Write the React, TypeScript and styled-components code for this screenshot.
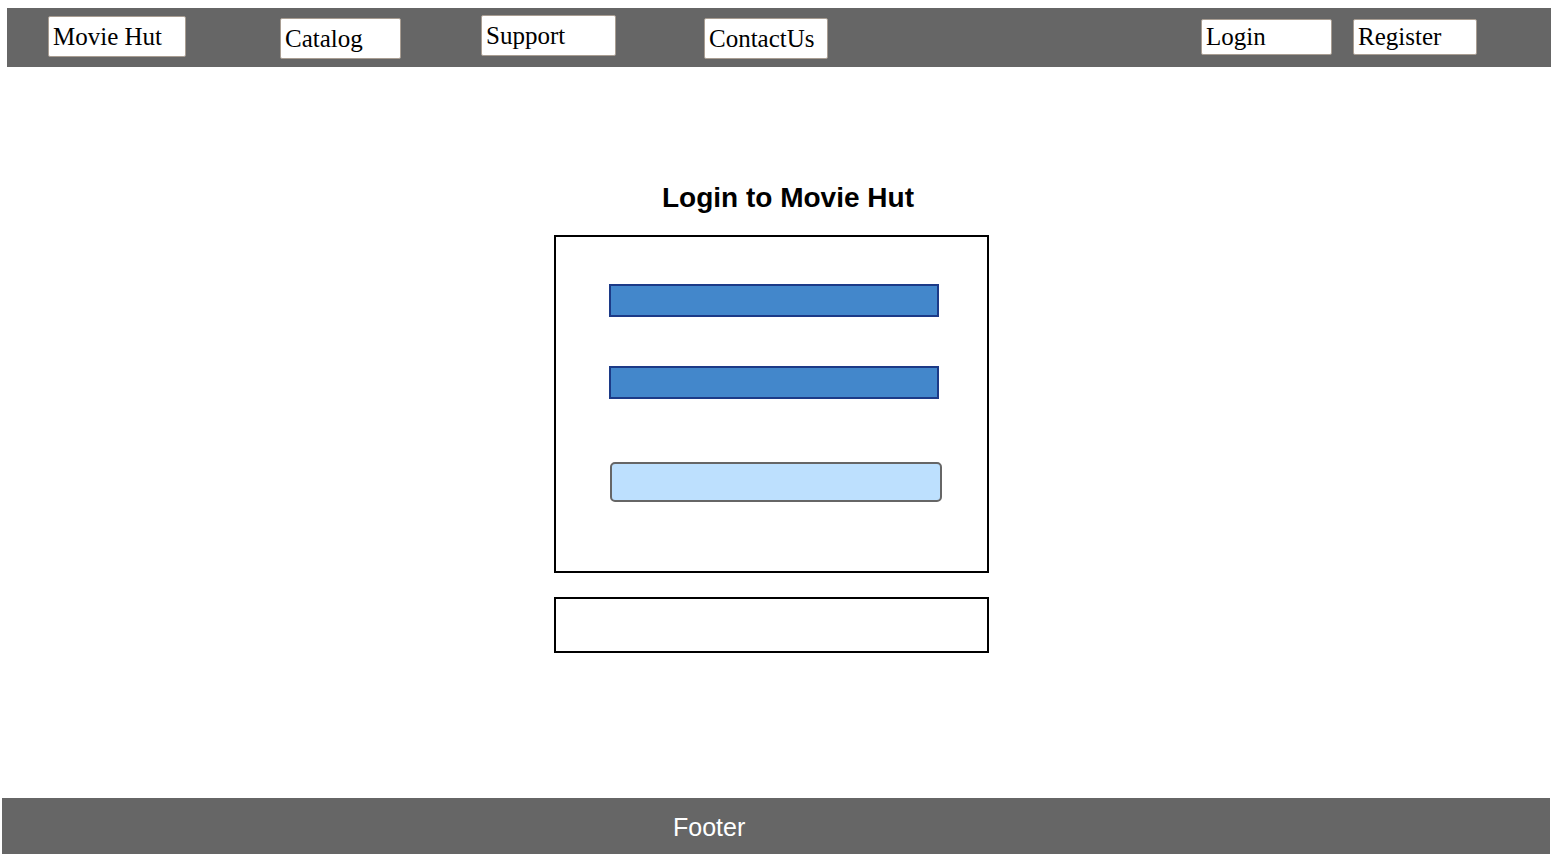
import React from "react";
import styled, { createGlobalStyle } from "styled-components";

const GlobalStyle = createGlobalStyle`
  html, body {
    margin: 0;
    padding: 0;
    background: #ffffff;
  }
  body {
    font-family: "Liberation Sans", Arial, sans-serif;
  }
`;

const Page = styled.div`
  width: 1557px;
  height: 859px;
  display: flex;
  flex-direction: column;
  overflow: hidden;
`;

const Header = styled.header`
  margin: 8px 0 0 7px;
  width: 1544px;
  height: 59px;
  background: #666666;
  display: flex;
  align-items: flex-start;
  box-sizing: border-box;
`;

const NavItem = styled.div<{ $left: number; $top: number; $width: number; $compact?: boolean }>`
  margin-left: ${(p) => p.$left}px;
  margin-top: ${(p) => p.$top}px;
  width: ${(p) => p.$width}px;
  box-sizing: border-box;
  background: #ffffff;
  border: 1px solid #a89d92;
  border-radius: 2px;
  padding: ${(p) => (p.$compact ? "2px 4px 3px" : "5px 4px")};
  font-family: "Liberation Serif", "Times New Roman", serif;
  font-size: 25px;
  line-height: 29px;
  color: #000000;
  white-space: nowrap;
`;

const Main = styled.main`
  margin-left: 554px;
  width: 435px;
  padding-top: 115px;
  display: flex;
  flex-direction: column;
`;

const Title = styled.h1`
  margin: 0 0 21px 108px;
  font-family: "Liberation Sans", Arial, sans-serif;
  font-size: 28px;
  line-height: 32px;
  font-weight: bold;
  color: #000000;
  white-space: nowrap;
`;

const LoginBox = styled.section`
  box-sizing: border-box;
  width: 435px;
  height: 338px;
  border: 2px solid #000000;
  padding: 47px 0 0 53px;
  display: flex;
  flex-direction: column;
`;

const Field = styled.div<{ $gap: number }>`
  box-sizing: border-box;
  width: 330px;
  height: 33px;
  margin-bottom: ${(p) => p.$gap}px;
  background: #4387cb;
  border: 2px solid #1c3a87;
`;

const SubmitButton = styled.div`
  box-sizing: border-box;
  margin-left: 1px;
  width: 332px;
  height: 40px;
  background: #bde0fe;
  border: 2px solid #666666;
  border-radius: 5px;
`;

const InfoBox = styled.section`
  box-sizing: border-box;
  margin-top: 24px;
  width: 435px;
  height: 56px;
  border: 2px solid #000000;
`;

const Footer = styled.footer`
  margin: 145px 0 0 2px;
  width: 1548px;
  height: 56px;
  box-sizing: border-box;
  background: #666666;
  padding: 15px 0 0 671px;
  font-family: "Liberation Sans", Arial, sans-serif;
  font-size: 25px;
  line-height: 29px;
  color: #ffffff;
`;

export default function App() {
  return (
    <>
      <GlobalStyle />
      <Page>
        <Header>
          <NavItem $left={41} $top={8} $width={138}>Movie Hut</NavItem>
          <NavItem $left={94} $top={10} $width={121}>Catalog</NavItem>
          <NavItem $left={80} $top={7} $width={135}>Support</NavItem>
          <NavItem $left={88} $top={10} $width={124}>ContactUs</NavItem>
          <NavItem $left={373} $top={11} $width={131} $compact>Login</NavItem>
          <NavItem $left={21} $top={11} $width={124} $compact>Register</NavItem>
        </Header>
        <Main>
          <Title>Login to Movie Hut</Title>
          <LoginBox>
            <Field $gap={49} />
            <Field $gap={63} />
            <SubmitButton />
          </LoginBox>
          <InfoBox />
        </Main>
        <Footer>Footer</Footer>
      </Page>
    </>
  );
}
